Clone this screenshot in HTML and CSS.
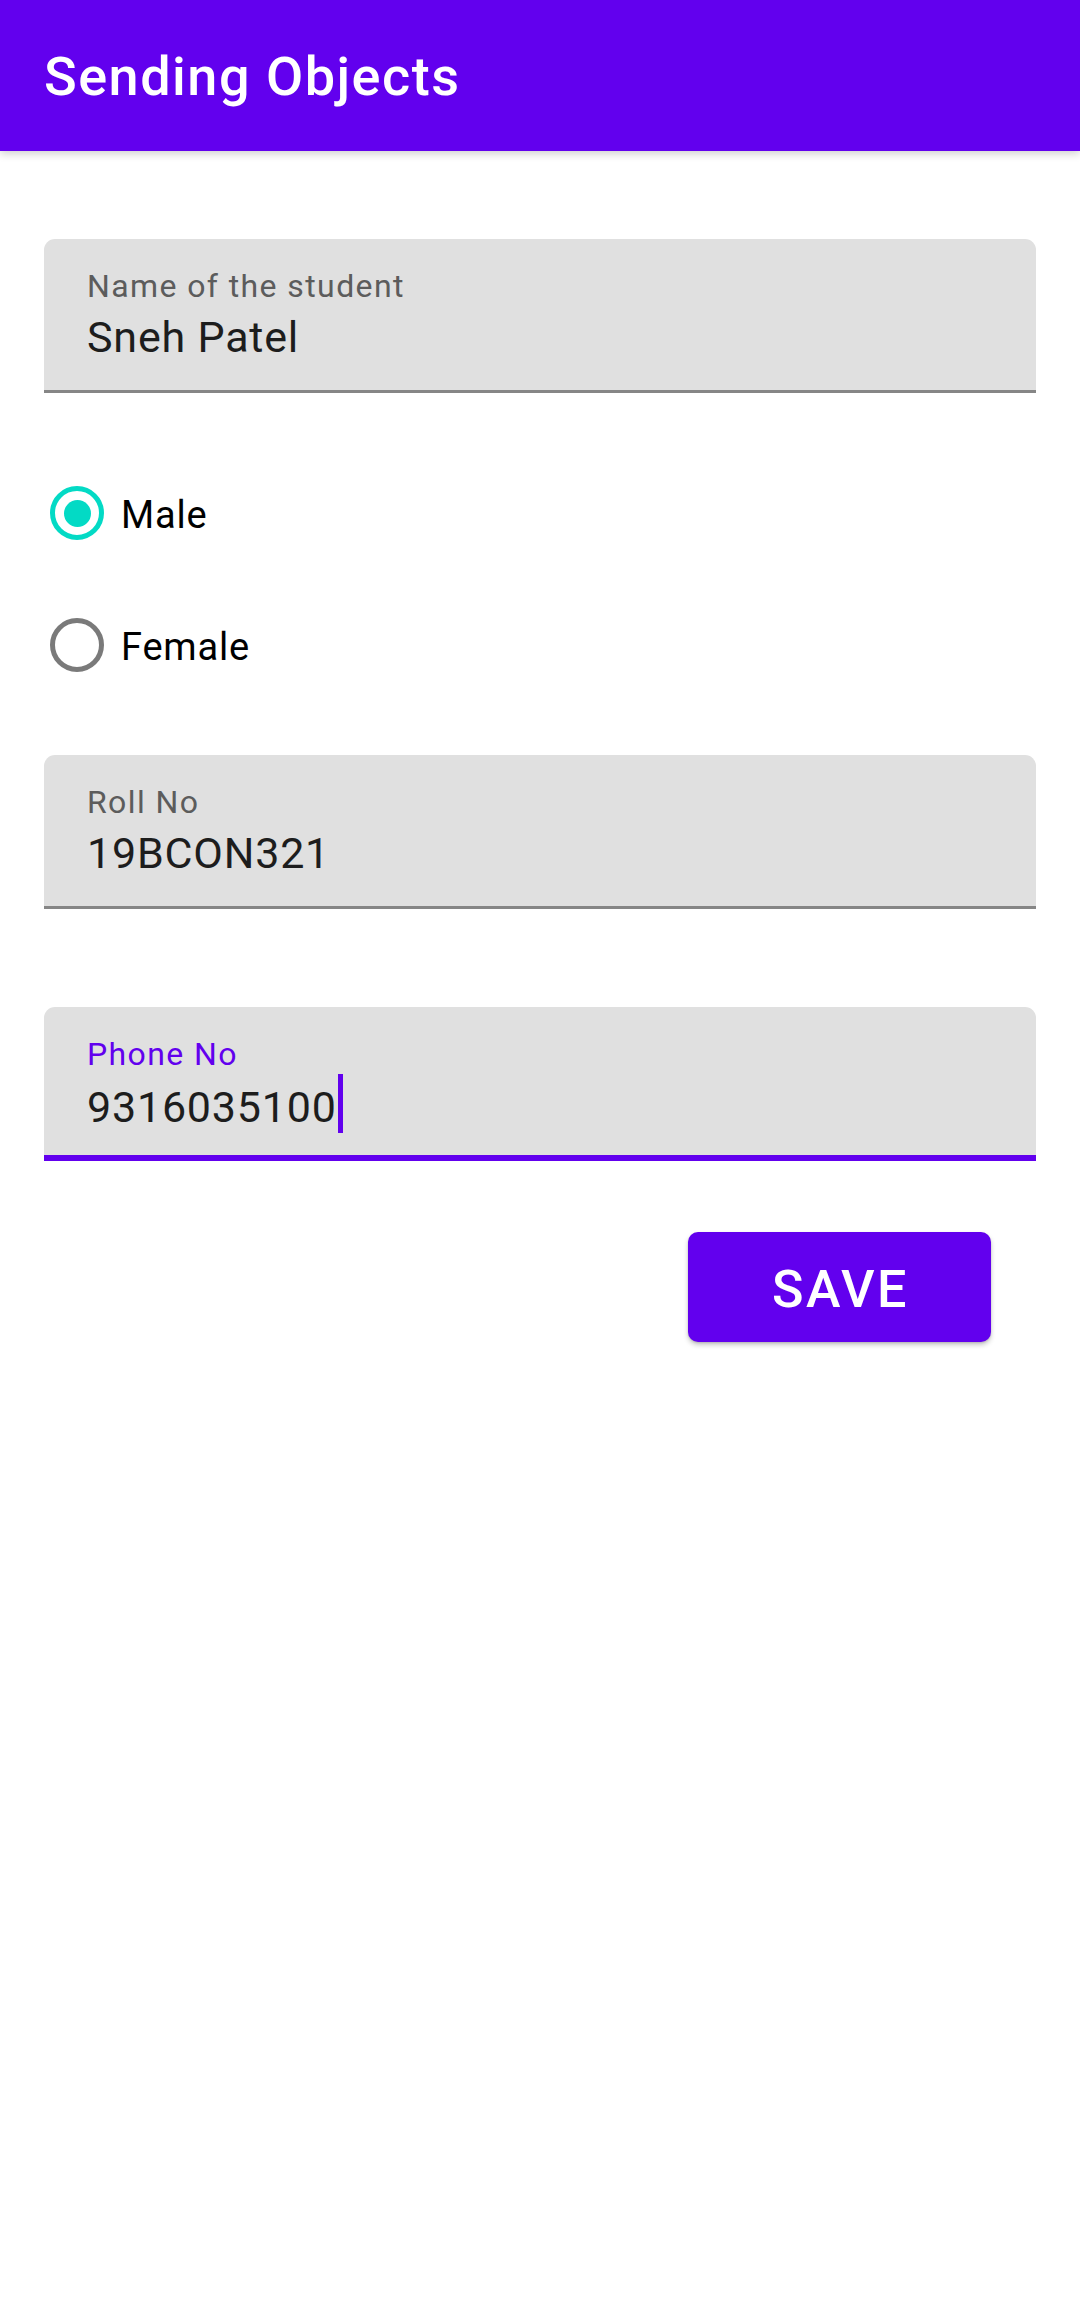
FILE: index.html
```html
<!DOCTYPE html>
<html lang="en">
<head>
<meta charset="utf-8">
<title>Sending Objects</title>
<link rel="stylesheet" href="styles.css">
</head>
<body>
<header class="appbar">
  <h1 class="appbar-title">Sending Objects</h1>
</header>
<main class="content">
  <div class="field">
    <div class="field-label">Name of the student</div>
    <div class="field-value">Sneh Patel</div>
  </div>

  <div class="radio-group">
    <div class="radio-row">
      <span class="radio radio-checked"><span class="radio-dot"></span></span>
      <span class="radio-text">Male</span>
    </div>
    <div class="radio-row">
      <span class="radio"></span>
      <span class="radio-text">Female</span>
    </div>
  </div>

  <div class="field field-roll">
    <div class="field-label">Roll No</div>
    <div class="field-value">19BCON321</div>
  </div>

  <div class="field field-phone field-focused">
    <div class="field-label">Phone No</div>
    <div class="field-value">9316035100<span class="cursor"></span></div>
  </div>

  <div class="actions">
    <button class="btn-save" type="button">SAVE</button>
  </div>
</main>
</body>
</html>
```

FILE: styles.css
```css
* {
  box-sizing: border-box;
}

html, body {
  margin: 0;
  padding: 0;
  background: #ffffff;
}

body {
  width: 1080px;
  min-height: 2302px;
  font-family: Roboto, "Noto Sans", "Liberation Sans", sans-serif;
}

.appbar {
  height: 151px;
  background: #6200ee;
  display: flex;
  align-items: center;
  padding-left: 44px;
  box-shadow: 0 3px 8px rgba(0, 0, 0, 0.18);
  position: relative;
  z-index: 1;
}

.appbar-title {
  margin: 0;
  color: #ffffff;
  font-size: 54px;
  font-weight: 500;
  letter-spacing: 1.5px;
  line-height: 64px;
  padding-top: 2px;
}

.content {
  padding: 88px 44px 0 44px;
  display: flex;
  flex-direction: column;
}

.field {
  height: 154px;
  background: #e0e0e0;
  border-radius: 11px 11px 0 0;
  border-bottom: 3px solid #868686;
  padding: 28px 43px 0 43px;
}

.field-label {
  font-size: 32px;
  line-height: 38px;
  color: #5c5c5c;
  letter-spacing: 1.4px;
}

.field-value {
  margin-top: 7px;
  font-size: 43px;
  line-height: 50px;
  color: #1d1d1d;
  letter-spacing: 0.8px;
  display: flex;
  align-items: center;
}

.field-focused {
  border-bottom: 6px solid #6200ee;
}

.field-focused .field-label {
  color: #6200ee;
}

.cursor {
  display: inline-block;
  width: 5px;
  height: 59px;
  background: #6200ee;
  margin-left: 1px;
  margin-top: -6px;
}

.radio-group {
  margin-top: 54px;
  display: flex;
  flex-direction: column;
}

.radio-row {
  height: 132px;
  display: flex;
  align-items: center;
}

.radio {
  width: 54px;
  height: 54px;
  border-radius: 50%;
  border: 5px solid #7a7a7a;
  margin-left: 6px;
  display: flex;
  align-items: center;
  justify-content: center;
  flex-shrink: 0;
}

.radio-checked {
  border-color: #03dac5;
}

.radio-dot {
  width: 27px;
  height: 27px;
  border-radius: 50%;
  background: #03dac5;
}

.radio-text {
  margin-left: 17px;
  font-size: 38px;
  color: #000000;
  padding-top: 4px;
  letter-spacing: 0.8px;
}

.field-roll {
  margin-top: 44px;
}

.field-phone {
  margin-top: 98px;
}

.actions {
  margin-top: 71px;
  display: flex;
  justify-content: flex-end;
  padding-right: 45px;
}

.btn-save {
  width: 303px;
  height: 110px;
  border: none;
  border-radius: 10px;
  background: #6200ee;
  color: #ffffff;
  font-family: Roboto, "Noto Sans", "Liberation Sans", sans-serif;
  font-size: 52px;
  font-weight: 500;
  letter-spacing: 2.5px;
  padding: 4px 0 0 2px;
  box-shadow: 0 3px 5px rgba(0, 0, 0, 0.22), 0 1px 2px rgba(0, 0, 0, 0.12);
}
```
